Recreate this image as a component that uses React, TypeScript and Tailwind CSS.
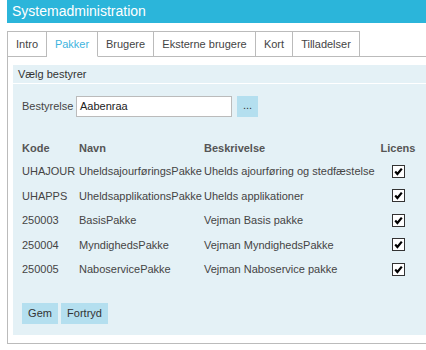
import { Fragment } from 'react'

const tabs = [
  { label: 'Intro', w: 'w-[39px]' },
  { label: 'Pakker', w: 'w-[51px]', active: true },
  { label: 'Brugere', w: 'w-[56px]' },
  { label: 'Eksterne brugere', w: 'w-[102px]' },
  { label: 'Kort', w: 'w-[37px]' },
  { label: 'Tilladelser', w: 'w-[67px]' },
]

const rows = [
  ['UHAJOUR', 'UheldsajourføringsPakke', 'Uhelds ajourføring og stedfæstelse'],
  ['UHAPPS', 'UheldsapplikationsPakke', 'Uhelds applikationer'],
  ['250003', 'BasisPakke', 'Vejman Basis pakke'],
  ['250004', 'MyndighedsPakke', 'Vejman MyndighedsPakke'],
  ['250005', 'NaboservicePakke', 'Vejman Naboservice pakke'],
]

function Check() {
  return (
    <span className="inline-flex w-[13px] h-[13px] border border-[#333] bg-white items-center justify-center">
      <svg width="9" height="9" viewBox="0 0 9 9">
        <path d="M1.2 4.6 L3.4 7 L7.8 1.6" fill="none" stroke="#000" strokeWidth="2.2" />
      </svg>
    </span>
  )
}

export default function App() {
  return (
    <div className="w-[426px] h-[350px] overflow-hidden bg-white text-[11px] text-[#444] font-[family-name:Liberation_Sans,Arial,sans-serif]">
      {/* Title bar */}
      <div className="ml-[7px] h-[23px] bg-[#2bb5da] text-white text-[14px] pl-[5px] flex items-center">
        Systemadministration
      </div>

      <div className="ml-[7px] mt-[8px] w-[440px] border-l border-b border-[#bbb] pb-[8px]">
        {/* Tabs */}
        <div className="flex h-[26px] border-b border-[#bbb]">
          {tabs.map((t) => (
            <div
              key={t.label}
              className={`${t.w} h-[26px] border-t border-r border-[#bbb] flex items-center justify-center ${
                t.active ? 'bg-white text-[#3eb4de] border-b border-b-white' : 'text-[#444]'
              }`}
            >
              {t.label}
            </div>
          ))}
        </div>

        {/* Panel */}
        <div className="ml-[5px] mt-[8px] bg-[#e4f1f6]">
          <div className="h-[19px] pl-[5px] flex items-center text-[#333] border-b border-white">
            Vælg bestyrer
          </div>
          <div className="pl-[9px] pt-[12px] pb-[11px]">
            <div className="flex items-center h-[21px]">
              <span className="w-[54px]">Bestyrelse</span>
              <div className="w-[156px] h-[21px] bg-white border border-[#bbb] flex items-center pl-[3px] text-[#222]">
                Aabenraa
              </div>
              <div className="ml-[5px] w-[21px] h-[21px] bg-[#b4dfef] flex items-center justify-center text-[#333] pb-[2px]">
                ...
              </div>
            </div>

            <div className="mt-[20px] grid grid-cols-[57px_125px_174px_40px]">
              <div className="h-[22px] font-bold text-[#555] flex items-center">Kode</div>
              <div className="h-[22px] font-bold text-[#555] flex items-center">Navn</div>
              <div className="h-[22px] font-bold text-[#555] flex items-center">Beskrivelse</div>
              <div className="h-[22px] font-bold text-[#555] flex items-center justify-center">Licens</div>
              {rows.map((r) => (
                <Fragment key={r[0]}>
                  <div className="h-[24.5px] flex items-center whitespace-nowrap">{r[0]}</div>
                  <div className="h-[24.5px] flex items-center whitespace-nowrap">{r[1]}</div>
                  <div className="h-[24.5px] flex items-center whitespace-nowrap">{r[2]}</div>
                  <div className="h-[24.5px] flex items-center justify-center">
                    <Check />
                  </div>
                </Fragment>
              ))}
            </div>

            <div className="mt-[21px] flex gap-[3px]">
              <div className="w-[36px] h-[21px] bg-[#b4dfef] flex items-center justify-center text-[#333]">Gem</div>
              <div className="w-[47px] h-[21px] bg-[#b4dfef] flex items-center justify-center text-[#333]">Fortryd</div>
            </div>
          </div>
        </div>
      </div>
    </div>
  )
}
